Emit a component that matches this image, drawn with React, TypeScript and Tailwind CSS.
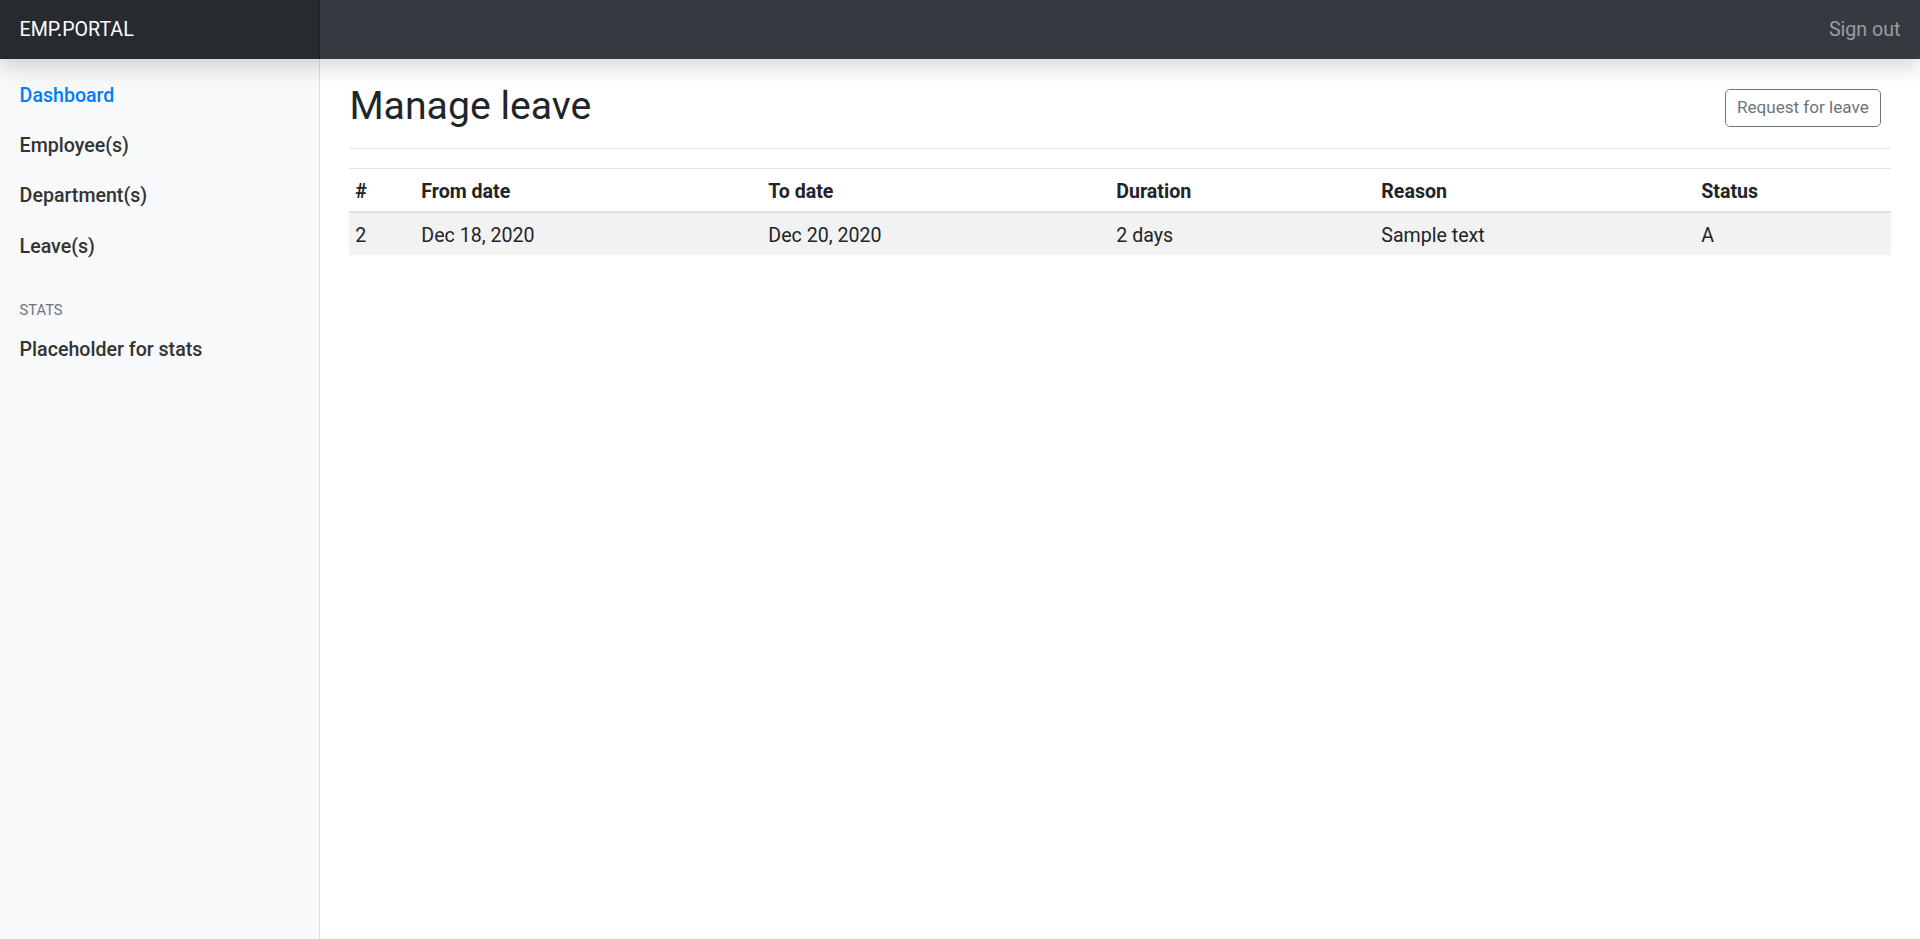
import React from "react";

const navItems = [
  { label: "Dashboard", active: true },
  { label: "Employee(s)" },
  { label: "Department(s)" },
  { label: "Leave(s)" },
];

const leaves = [
  { id: 2, from: "Dec 18, 2020", to: "Dec 20, 2020", duration: "2 days", reason: "Sample text", status: "A" },
];

export default function App() {
  return (
    <div className="flex h-screen flex-col overflow-hidden bg-white font-['Segoe_UI','Roboto','Liberation_Sans',sans-serif] text-[19.6px] leading-[1.5] text-[#212529]">
      {/* top navbar */}
      <header className="relative z-10 flex h-[59px] shrink-0 items-center bg-[#343a40] shadow-[0_9.8px_19.6px_rgba(0,0,0,0.15)]">
        <a className="flex h-full w-[320px] items-center bg-black/25 px-[19.6px] pt-[1px] text-[19.6px] text-white shadow-[inset_-1px_0_0_rgba(0,0,0,0.25)]">
          EMP.PORTAL
        </a>
        <div className="flex-1" />
        <a className="px-[19.6px] pt-[1px] text-white/50">Sign out</a>
      </header>

      <div className="flex min-h-0 flex-1">
        {/* sidebar */}
        <aside className="w-[320px] shrink-0 bg-[#f8f9fa] pt-[10.3px] shadow-[inset_-1px_0_0_rgba(0,0,0,0.1)]">
          <ul className="flex flex-col">
            {navItems.map((item) => (
              <li key={item.label}>
                <a
                  className={`block px-[19.6px] pb-[9px] pt-[11.8px] font-medium ${
                    item.active ? "text-[#007bff]" : "text-[#333]"
                  }`}
                >
                  {item.label}
                </a>
              </li>
            ))}
          </ul>
          <h6 className="mb-[1.5px] mt-[29.4px] px-[19.6px] text-[14.7px] uppercase text-[#6c757d]">
            Stats
          </h6>
          <ul>
            <li>
              <a className="block px-[19.6px] pb-[9px] pt-[11.8px] font-medium text-[#333]">Placeholder for stats</a>
            </li>
          </ul>
        </aside>

        {/* main */}
        <main className="flex-1 px-[29.4px]">
          <div className="mb-[19.6px] flex items-center justify-between border-b border-[#dee2e6] pb-[9.8px] pt-[24.4px]">
            <h1 className="mb-[7.4px] text-[39.2px] font-normal leading-[1.2]">Manage leave</h1>
            <div className="mb-[4.8px] mr-[9.8px]">
              <button className="flex h-[38px] w-[156px] items-center justify-center rounded-[4.9px] border border-[#6c757d] text-[17.1px] text-[#6c757d]">
                Request for leave
              </button>
            </div>
          </div>

          <table className="w-full table-fixed text-left">
            <thead>
              <tr>
                <th className="w-[66px] border-b-2 border-t border-[#dee2e6] px-[5.9px] pb-[5px] pt-[7.8px] font-bold">#</th>
                <th className="w-[347px] border-b-2 border-t border-[#dee2e6] px-[5.9px] pb-[5px] pt-[7.8px] font-bold">From date</th>
                <th className="w-[348px] border-b-2 border-t border-[#dee2e6] px-[5.9px] pb-[5px] pt-[7.8px] font-bold">To date</th>
                <th className="w-[265px] border-b-2 border-t border-[#dee2e6] px-[5.9px] pb-[5px] pt-[7.8px] font-bold">Duration</th>
                <th className="w-[320px] border-b-2 border-t border-[#dee2e6] px-[5.9px] pb-[5px] pt-[7.8px] font-bold">Reason</th>
                <th className="border-b-2 border-t border-[#dee2e6] px-[5.9px] pb-[5px] pt-[7.8px] font-bold">Status</th>
              </tr>
            </thead>
            <tbody>
              {leaves.map((l) => (
                <tr key={l.id} className="bg-black/5">
                  <td className="px-[5.9px] pb-[4.5px] pt-[7.3px]">{l.id}</td>
                  <td className="px-[5.9px] pb-[4.5px] pt-[7.3px]">{l.from}</td>
                  <td className="px-[5.9px] pb-[4.5px] pt-[7.3px]">{l.to}</td>
                  <td className="px-[5.9px] pb-[4.5px] pt-[7.3px]">{l.duration}</td>
                  <td className="px-[5.9px] pb-[4.5px] pt-[7.3px]">{l.reason}</td>
                  <td className="px-[5.9px] pb-[4.5px] pt-[7.3px]">{l.status}</td>
                </tr>
              ))}
            </tbody>
          </table>
        </main>
      </div>
    </div>
  );
}
